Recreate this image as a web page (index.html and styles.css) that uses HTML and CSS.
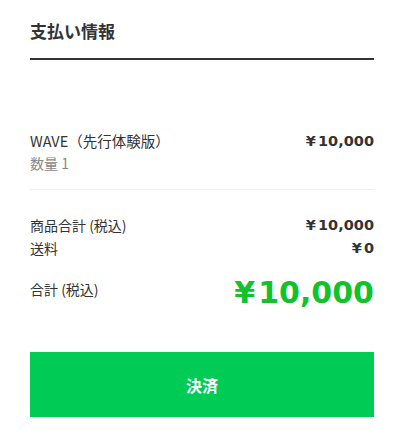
FILE: index.html
```html
<!DOCTYPE html>
<html lang="ja">
<head>
<meta charset="utf-8">
<link rel="stylesheet" href="styles.css">
</head>
<body>
<div class="page">
  <h1 class="title">支払い情報</h1>
  <div class="item">
    <div class="item-info">
      <div class="item-name">WAVE（先行体験版）</div>
      <div class="item-qty">数量 1</div>
    </div>
    <div class="price"><span class="yen">¥</span>10,000</div>
  </div>
  <div class="summary">
    <div class="row">
      <span class="label">商品合計 (税込)</span>
      <span class="price"><span class="yen">¥</span>10,000</span>
    </div>
    <div class="row">
      <span class="label">送料</span>
      <span class="price"><span class="yen">¥</span>0</span>
    </div>
    <div class="row total">
      <span class="label total-label">合計 (税込)</span>
      <span class="total-price"><span class="yen">¥</span>10,000</span>
    </div>
  </div>
  <button class="pay">決済</button>
</div>
</body>
</html>
```

FILE: styles.css
```css
* { box-sizing: border-box; }
html, body { margin: 0; padding: 0; background: #fff; }
body {
  font-family: "Noto Sans CJK JP", "DejaVu Sans", sans-serif;
  color: #333;
}
.page {
  padding: 0 26px 0 30px;
}
.title {
  margin: 0;
  padding: 19px 0 15px;
  font-size: 17px;
  font-weight: 700;
  line-height: 24px;
  border-bottom: 2px solid #333;
}
.item {
  display: flex;
  justify-content: space-between;
  align-items: flex-start;
  padding: 70px 0 15px;
  border-bottom: 1px solid #eee;
}
.item-name {
  font-size: 14.5px;
  line-height: 22px;
}
.item-qty {
  font-size: 14px;
  line-height: 22px;
  color: #888;
}
.price {
  font-family: "DejaVu Sans", sans-serif;
  font-weight: 700;
  font-size: 14.5px;
  line-height: 22px;
}
.yen {
  margin-right: 0.15em;
}
.summary {
  padding-top: 24px;
}
.row {
  display: flex;
  justify-content: space-between;
  align-items: center;
  font-size: 14px;
  line-height: 22.5px;
}
.row.total {
  margin-top: 14px;
  align-items: flex-start;
}
.total-label {
  padding-top: 5px;
}
.total-price {
  font-family: "DejaVu Sans", sans-serif;
  font-weight: 700;
  font-size: 30px;
  line-height: 40px;
  color: #12c22a;
}
.total-price .yen {
  margin-right: 0.1em;
}
.pay {
  display: block;
  width: 100%;
  height: 65px;
  margin-top: 39px;
  border: 0;
  background: #00cc55;
  color: #fff;
  font-family: "Noto Sans CJK JP", sans-serif;
  font-size: 16px;
  font-weight: 700;
}
```
